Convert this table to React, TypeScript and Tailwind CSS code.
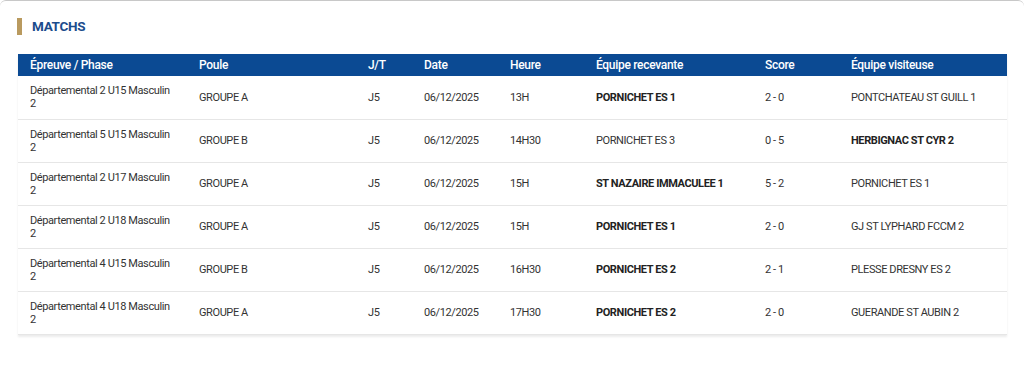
import React from 'react';

type Match = {
  epreuve: string;
  poule: string;
  jt: string;
  date: string;
  heure: string;
  home: string;
  score: string;
  away: string;
  winner: 'home' | 'away';
};

const matches: Match[] = [
  { epreuve: 'Départemental 2 U15 Masculin 2', poule: 'GROUPE A', jt: 'J5', date: '06/12/2025', heure: '13H', home: 'PORNICHET ES 1', score: '2 - 0', away: 'PONTCHATEAU ST GUILL 1', winner: 'home' },
  { epreuve: 'Départemental 5 U15 Masculin 2', poule: 'GROUPE B', jt: 'J5', date: '06/12/2025', heure: '14H30', home: 'PORNICHET ES 3', score: '0 - 5', away: 'HERBIGNAC ST CYR 2', winner: 'away' },
  { epreuve: 'Départemental 2 U17 Masculin 2', poule: 'GROUPE A', jt: 'J5', date: '06/12/2025', heure: '15H', home: 'ST NAZAIRE IMMACULEE 1', score: '5 - 2', away: 'PORNICHET ES 1', winner: 'home' },
  { epreuve: 'Départemental 2 U18 Masculin 2', poule: 'GROUPE A', jt: 'J5', date: '06/12/2025', heure: '15H', home: 'PORNICHET ES 1', score: '2 - 0', away: 'GJ ST LYPHARD FCCM 2', winner: 'home' },
  { epreuve: 'Départemental 4 U15 Masculin 2', poule: 'GROUPE B', jt: 'J5', date: '06/12/2025', heure: '16H30', home: 'PORNICHET ES 2', score: '2 - 1', away: 'PLESSE DRESNY ES 2', winner: 'home' },
  { epreuve: 'Départemental 4 U18 Masculin 2', poule: 'GROUPE A', jt: 'J5', date: '06/12/2025', heure: '17H30', home: 'PORNICHET ES 2', score: '2 - 0', away: 'GUERANDE ST AUBIN 2', winner: 'home' },
];

const headers = [
  { label: 'Épreuve / Phase', w: 'w-[169px]' },
  { label: 'Poule', w: 'w-[169px]' },
  { label: 'J/T', w: 'w-[56px]' },
  { label: 'Date', w: 'w-[86px]' },
  { label: 'Heure', w: 'w-[86px]' },
  { label: 'Équipe recevante', w: 'w-[169px]' },
  { label: 'Score', w: 'w-[86px]' },
  { label: 'Équipe visiteuse', w: 'w-[168px]' },
];

const App: React.FC = () => {
  return (
    <div className="w-[1024px] h-[375px] bg-white overflow-hidden font-['Roboto',sans-serif]">
      <div className="h-full border-t border-[#c8c8c8] rounded-tl-[6px] rounded-tr-[6px] bg-white px-[18px] pt-[16px]">
        {/* Title */}
        <div className="flex items-center gap-[10px] h-[18px] ml-[-1px]">
          <span className="block w-[5px] h-[17px] bg-[#b99a5f]" />
          <h2 className="text-[13.5px] font-bold text-[#1c4c8c] tracking-[-0.3px]">MATCHS</h2>
        </div>

        {/* Table */}
        <table className="mt-[19px] w-[989px] table-fixed border-collapse shadow-[0_2px_2px_rgba(0,0,0,0.08)]">
          <thead>
            <tr className="bg-[#0b4a93] h-[22px]">
              {headers.map((h) => (
                <th
                  key={h.label}
                  className={`${h.w} px-[12px] text-left text-[12px] tracking-[-0.3px] font-medium text-white leading-[22px]`}
                >
                  {h.label}
                </th>
              ))}
            </tr>
          </thead>
          <tbody>
            {matches.map((m, i) => (
              <tr key={i} className="h-[43px] border-b border-[#e6e6e6] text-[11px] tracking-[-0.4px] text-[#333333] leading-[13px]">
                <td className="px-[12px] align-middle">{m.epreuve}</td>
                <td className="px-[12px]">{m.poule}</td>
                <td className="px-[12px]">{m.jt}</td>
                <td className="px-[12px]">{m.date}</td>
                <td className="px-[12px]">{m.heure}</td>
                <td className={`px-[12px] ${m.winner === 'home' ? 'font-bold text-[#222222]' : ''}`}>{m.home}</td>
                <td className="px-[12px]">{m.score}</td>
                <td className={`px-[12px] ${m.winner === 'away' ? 'font-bold text-[#222222]' : ''}`}>{m.away}</td>
              </tr>
            ))}
          </tbody>
        </table>
      </div>
    </div>
  );
};

export default App;
